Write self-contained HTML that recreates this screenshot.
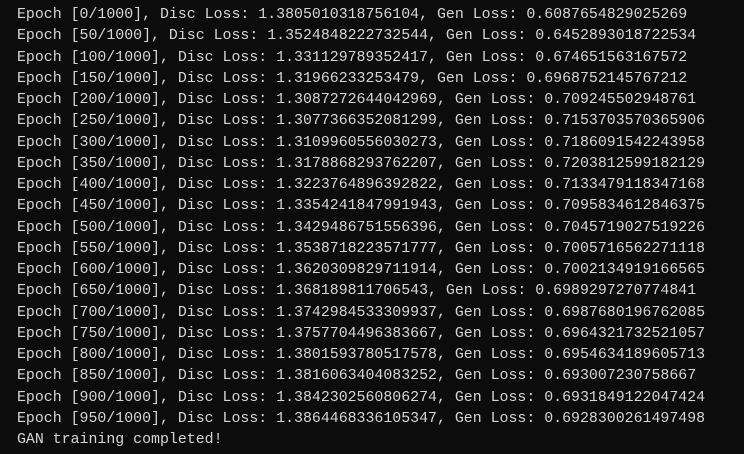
<!DOCTYPE html>
<html><head><style>
html,body{margin:0;padding:0;background:#0c0c0c;width:744px;height:454px;overflow:hidden}
pre{margin:0;position:absolute;left:17px;top:5px;font-family:"Liberation Mono",monospace;font-size:14.9px;line-height:21.25px;color:#d6d6d6}
</style></head><body><pre>Epoch [0/1000], Disc Loss: 1.3805010318756104, Gen Loss: 0.6087654829025269
Epoch [50/1000], Disc Loss: 1.3524848222732544, Gen Loss: 0.6452893018722534
Epoch [100/1000], Disc Loss: 1.331129789352417, Gen Loss: 0.674651563167572
Epoch [150/1000], Disc Loss: 1.31966233253479, Gen Loss: 0.6968752145767212
Epoch [200/1000], Disc Loss: 1.3087272644042969, Gen Loss: 0.709245502948761
Epoch [250/1000], Disc Loss: 1.3077366352081299, Gen Loss: 0.7153703570365906
Epoch [300/1000], Disc Loss: 1.3109960556030273, Gen Loss: 0.7186091542243958
Epoch [350/1000], Disc Loss: 1.3178868293762207, Gen Loss: 0.7203812599182129
Epoch [400/1000], Disc Loss: 1.3223764896392822, Gen Loss: 0.7133479118347168
Epoch [450/1000], Disc Loss: 1.3354241847991943, Gen Loss: 0.7095834612846375
Epoch [500/1000], Disc Loss: 1.3429486751556396, Gen Loss: 0.7045719027519226
Epoch [550/1000], Disc Loss: 1.3538718223571777, Gen Loss: 0.7005716562271118
Epoch [600/1000], Disc Loss: 1.3620309829711914, Gen Loss: 0.7002134919166565
Epoch [650/1000], Disc Loss: 1.368189811706543, Gen Loss: 0.6989297270774841
Epoch [700/1000], Disc Loss: 1.3742984533309937, Gen Loss: 0.6987680196762085
Epoch [750/1000], Disc Loss: 1.3757704496383667, Gen Loss: 0.6964321732521057
Epoch [800/1000], Disc Loss: 1.3801593780517578, Gen Loss: 0.6954634189605713
Epoch [850/1000], Disc Loss: 1.3816063404083252, Gen Loss: 0.693007230758667
Epoch [900/1000], Disc Loss: 1.3842302560806274, Gen Loss: 0.6931849122047424
Epoch [950/1000], Disc Loss: 1.3864468336105347, Gen Loss: 0.6928300261497498
GAN training completed!</pre></body></html>
